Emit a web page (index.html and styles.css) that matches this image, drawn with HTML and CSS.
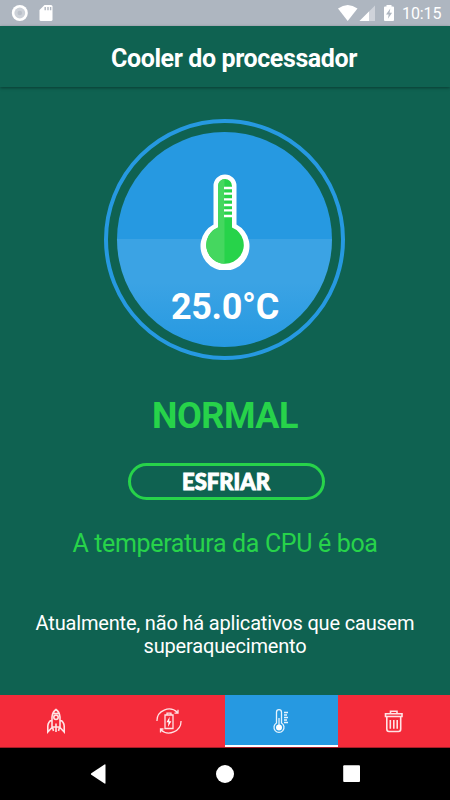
FILE: index.html
```html
<!DOCTYPE html>
<html lang="pt-BR">
<head>
    <meta charset="UTF-8">
    <meta name="viewport" content="width=device-width, initial-scale=1.0">
    <title>Cooler do processador</title>
    <link rel="stylesheet" href="styles.css">
</head>
<body>

<div class="status-bar">
    <svg class="status-icons" width="60" height="26" viewBox="0 0 60 26">
        <circle cx="19.8" cy="13" r="8" fill="#fff"/>
        <circle cx="19.8" cy="13" r="5.4" fill="#ccd1d8"/>
        <circle cx="19.8" cy="13" r="2.3" fill="#bac0c9"/>
        <path d="M44.500 5H51q1.500 0 1.500 1.500V19.500Q52.500 21 51 21H41Q39.500 21 39.500 19.500V10z" fill="#fff"/>
        <path d="M45.200 7v3.200M48 7v3.200M50.600 7v3.200" stroke="#aeb6c0" stroke-width="1.400"/>
    </svg>
    <div class="status-right">
        <svg width="60" height="26" viewBox="336 0 60 26">
            <path d="M338 8.500Q347.700 1.500 357.500 8.500L347.700 21z" fill="#fff"/>
            <path d="M375 5.500V21H359.500z" fill="#cfd3da"/>
            <path d="M369 11.500V21H359.500z" fill="#fff"/>
            <path d="M386.500 5h5v1.500h1.500q1 0 1 1V20q0 1-1 1h-8q-1 0-1-1V7.500q0-1 1-1h1.500z" fill="#fff"/>
            <path d="M390.300 8.500l-4.300 6h2.700l-.8 4.300 4.200-6h-2.600z" fill="#aeb6c0"/>
        </svg>
        <span class="clock">10:15</span>
    </div>
</div>

<header>
    <h1 class="heading">Cooler do processador</h1>
</header>

<main class="cooler">
    <div class="gauge">
        <div class="gauge-inner">
            <svg class="thermometer" width="50" height="96" viewBox="0 0 50 96">
                <path d="M13.500 51V12a11.500 11.500 0 0 1 23 0V50.500A24.500 24.500 0 1 1 13.500 50.500z" fill="#fff"/>
                <path d="M18 53.500V12a7 7 0 0 1 14 0V53.500A18.800 18.800 0 1 1 18 53.500z" fill="#27d34a"/>
                <path d="M18 53.500V12a7 7 0 0 1 6.500-7V89.700A18.800 18.800 0 0 1 18 53.500z" fill="#45d75f"/>
                <path d="M24 14h8M24 19.600h8M24 25.300h8M24 31h8M24 36.400h8M24 42h8" stroke="#fff" stroke-width="2.300"/>
            </svg>
            <div class="temperature">25.0°C</div>
        </div>
    </div>

    <h2 class="state">NORMAL</h2>
    <button class="cool-btn">ESFRIAR</button>
    <p class="message">A temperatura da CPU é boa</p>
    <p class="details">Atualmente, não há aplicativos que causem superaquecimento</p>
</main>

<nav class="tabs">
    <a class="tab" href="#">
        <svg width="26" height="26" viewBox="0 0 26 26">
            <path d="M9 19V9Q9.500 4 13 1.500Q16.500 4 17 9V19zM10 5.500h6M9 11.500Q5 14 4.800 18V24L9 19.500M17 11.500Q21 14 21.200 18V24L17 19.500M9.500 19L10.500 23M16.500 19L15.500 23M13 15.500V24"/>
            <circle cx="13" cy="9.300" r="2.200"/>
        </svg>
    </a>
    <a class="tab" href="#">
        <svg class="thin" width="26" height="26" viewBox="0 0 26 26">
            <path d="M1 13A12 11.500 0 0 1 21.500 4.500M18.500 5.200L22 5.200V1.800M25 13A12 11.500 0 0 1 4.500 21.500M7.500 21H4.500V24.500"/>
            <path class="battery" d="M9 7h8v13.500H9zM11 7V5.200h4V7"/>
            <path class="filled" d="M13.700 8.700L10.500 14.300h2L11.900 19l3.500-5.700h-2.200z"/>
        </svg>
    </a>
    <a class="tab active" href="#">
        <svg class="thin" width="26" height="26" viewBox="0 0 26 26">
            <path d="M8.500 15V4.200a2.500 2.500 0 0 1 5 0V15a5 5 0 1 1-5 0zM11 10v9M16 4.500h4M16 7h3M16 9.500h4M16 12h3M16 14.500h4"/>
            <circle class="filled" cx="11" cy="19.500" r="3"/>
        </svg>
    </a>
    <a class="tab" href="#">
        <svg width="26" height="26" viewBox="0 0 26 26">
            <path d="M4.500 5.700H21V8.500H4.500zM9.500 5.500V3.200H16V5.500M5.800 8.500V21Q5.800 23.500 8 23.500H17.500Q19.700 23.500 19.700 21V8.500M9.300 12V20.800M12.800 12V20.800M16.200 12V20.800"/>
        </svg>
    </a>
</nav>

<div class="system-nav">
    <svg width="450" height="52" viewBox="0 748 450 52">
        <path d="M105.500 765v18q0 1-1 .5L91.300 774.800q-1-.8 0-1.600L104.500 764.500q1-.5 1 .5z" fill="#fff"/>
        <circle cx="225" cy="774" r="9" fill="#fff"/>
        <rect x="343.200" y="765.200" width="16.800" height="16.800" rx="1" fill="#fff"/>
    </svg>
</div>

</body>
</html>
```
FILE: styles.css
```css
* {
    box-sizing: border-box;
}

body {
    margin: 0;
    height: 800px;
    display: flex;
    flex-direction: column;
    overflow: hidden;
    background-color: #0f6251;
    font-family: Roboto, sans-serif;
    color: white;
}

svg {
    display: block;
}

.status-bar {
    height: 26px;
    display: flex;
    justify-content: space-between;
    background-color: #aeb6c0;
}

.status-right {
    display: flex;
    align-items: center;
    padding-right: 8px;
}

.clock {
    width: 46px;
    padding: 2px 0 0 6px;
    font-size: 16px;
    line-height: 24px;
    font-weight: 400;
    letter-spacing: -0.1px;
    white-space: nowrap;
}

header {
    height: 61px;
    padding-left: 111px;
    box-shadow: 0 1px 3px rgba(0, 0, 0, 0.4);
}

.heading {
    margin: 0;
    font-size: 25px;
    line-height: 65px;
    font-weight: 700;
    letter-spacing: -0.4px;
    white-space: nowrap;
}

.cooler {
    flex: 1;
    display: flex;
    flex-direction: column;
    align-items: center;
    padding-top: 32px;
}

.gauge {
    width: 241px;
    height: 241px;
    margin-right: 1px;
    padding: 9px 8px 8px;
    border: 4px solid #2699e1;
    border-radius: 50%;
}

.gauge-inner {
    width: 215px;
    height: 215px;
    margin: 0 auto;
    padding-top: 42px;
    display: flex;
    flex-direction: column;
    align-items: center;
    border-radius: 50%;
    background: linear-gradient(#2699e1 0 50%, #3ba3e4 50% 70%, #2699e1 100%);
}

.temperature {
    margin: 16px 0 0 1px;
    font-size: 36px;
    line-height: 42px;
    font-weight: 700;
    letter-spacing: -0.3px;
}

.state {
    margin: 34px 0 0;
    font-size: 36px;
    line-height: 44px;
    font-weight: 700;
    letter-spacing: -0.5px;
    color: #27d34a;
}

.cool-btn {
    width: 197px;
    height: 37px;
    margin: 25px 0 0 2px;
    padding: 0;
    border: 3px solid #27d34a;
    border-radius: 19px;
    background: none;
    color: white;
    font-family: Lato, sans-serif;
    font-size: 22px;
    line-height: 30px;
    font-weight: 900;
    -webkit-text-stroke: 0.9px white;
}

.message {
    margin: 28px 0 0;
    font-size: 25px;
    line-height: 32px;
    letter-spacing: -0.35px;
    color: #27d34a;
}

.details {
    width: 400px;
    margin: 52px 0 0;
    font-size: 20px;
    line-height: 23px;
    letter-spacing: -0.18px;
    text-align: center;
}

.tabs {
    height: 53px;
    display: flex;
    background-color: #f42b3a;
    border-bottom: 1px solid #a31d27;
}

.tab {
    flex: 1;
    display: flex;
    justify-content: center;
    padding-top: 13px;
}

.tab svg {
    fill: none;
    stroke: #ffe3e5;
    stroke-width: 1.6;
}

.tab .thin {
    stroke-width: 1.3;
}

.tab .filled {
    fill: white;
    stroke: none;
}

.tab.active {
    background-color: #2699e1;
    border-bottom: 2px solid white;
}

.tab.active svg {
    stroke: #e6f4fd;
}

.system-nav {
    height: 52px;
    background-color: black;
}
```
